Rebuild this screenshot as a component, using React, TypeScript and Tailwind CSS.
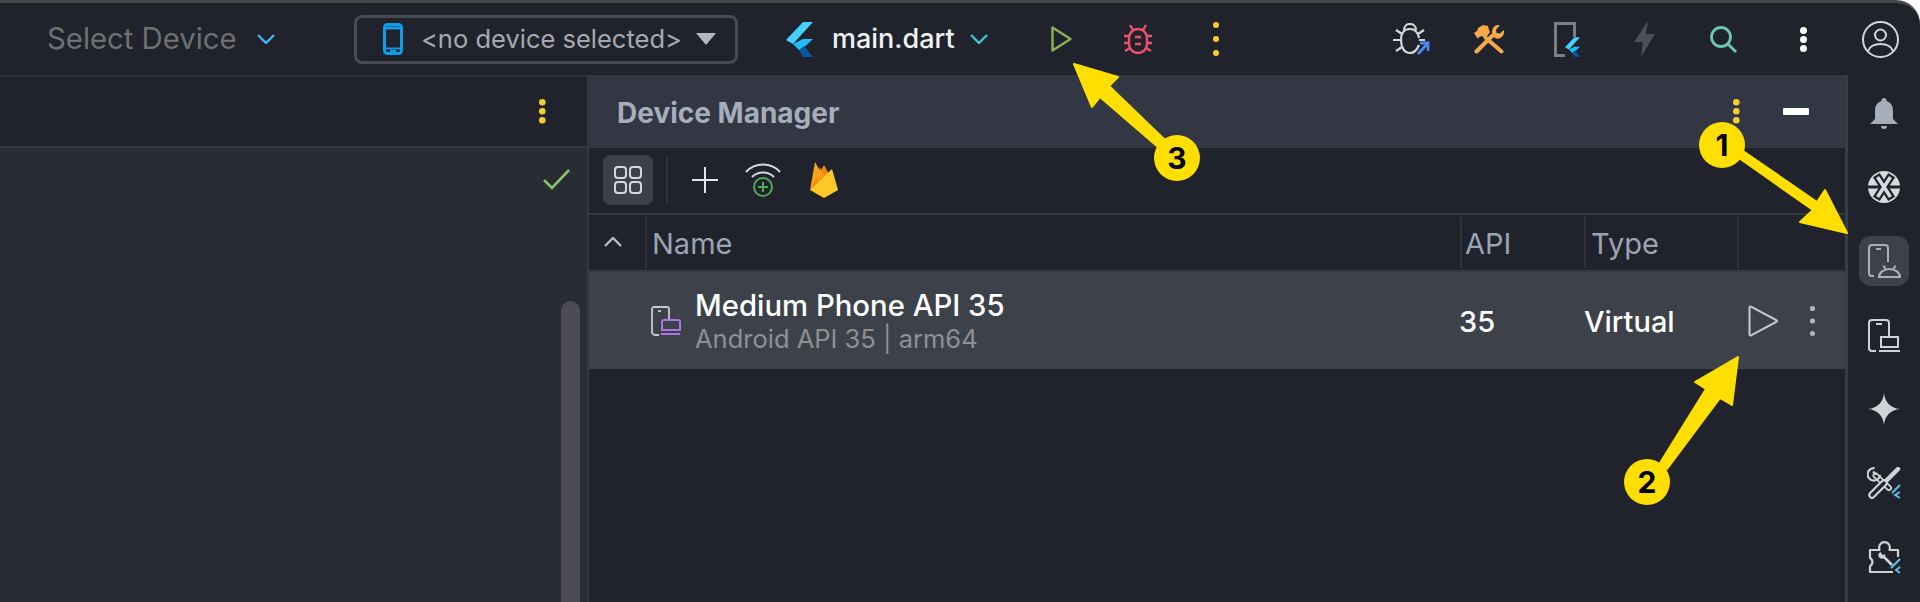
const Dots = ({ color, r = 3.5, gap = 9 }: { color: string; r?: number; gap?: number }) => (
  <svg width={r * 2 + 2} height={gap * 2 + r * 2 + 2} className="block shrink-0">
    {[0, 1, 2].map((i) => (
      <circle key={i} cx={r + 1} cy={r + 1 + i * gap} r={r} fill={color} />
    ))}
  </svg>
);

const Chevron = ({ color }: { color: string }) => (
  <svg width="18" height="10" viewBox="0 0 18 10" className="block shrink-0">
    <path d="M1 1l8 8 8-8" fill="none" stroke={color} strokeWidth="2.4" />
  </svg>
);

const FlutterMark = ({ className }: { className?: string }) => (
  <svg viewBox="0 0 27 35" className={className}>
    <path d="M0 18L17 0h10L7 22z" fill="#44d1fd" />
    <path d="M7 22l10-5h10L14 29z" fill="#1fbcfd" />
    <path d="M13 28l5-4 9 11H17z" fill="#08589c" />
  </svg>
);

const Hammer = () => (
  <svg width="30" height="30" viewBox="0 0 30 30" className="block shrink-0">
    <path d="M2.5 27.5L18 12" stroke="#f5a94a" strokeWidth="4" strokeLinecap="round" />
    <path d="M18 7a6 6 0 0 1 8-5.500l-4 4 .6 3.400 3.400.6 3.600-3.600a6.500 6.500 0 0 1-8.600 8.200L18 12z" fill="#f5a94a" />
    <path d="M12 14l15.500 13.500" stroke="#f5a94a" strokeWidth="4" strokeLinecap="round" />
    <path d="M0 9l3-2 1-3 5-3 5 1 1 4 1 2-5 7-3-3-3 1-1 2z" fill="#f5a94a" />
  </svg>
);

const ToolsSmall = () => (
  <svg width="34" height="33" viewBox="0 0 34 33" fill="none" className="block shrink-0">
    <path d="M8.500 8.500L22 21" stroke="#d0d2d6" strokeWidth="6" strokeLinecap="round" />
    <path d="M8.500 8.500L22 21" stroke="#20232b" strokeWidth="2.400" strokeLinecap="round" />
    <path d="M7.500 1.200a6.200 6.200 0 1 0 5.500 6.500" stroke="#d0d2d6" strokeWidth="2.200" />
    <path d="M6 4.500l3 3" stroke="#d0d2d6" strokeWidth="2.200" />
    <path d="M19 14L31 2" stroke="#d0d2d6" strokeWidth="4.500" strokeLinecap="round" />
    <path d="M5 28L17 16" stroke="#d0d2d6" strokeWidth="7.500" strokeLinecap="round" />
    <path d="M5 28L17 16" stroke="#20232b" strokeWidth="3.200" strokeLinecap="round" />
    <path d="M33 18l-8 8M33 25l-5 3 5 3" stroke="#5cc8ee" strokeWidth="1.800" />
  </svg>
);

const PuzzleTool = () => (
  <svg width="33" height="33" viewBox="0 0 33 33" fill="none" className="block shrink-0">
    <path d="M30 16V9h-8.500a5.500 5.500 0 1 0-10 0H2v8a4.500 4.500 0 0 1 0 8v6h23" stroke="#d0d2d6" strokeWidth="2.200" strokeLinejoin="round" />
    <path d="M15 15l9 9" stroke="#d0d2d6" strokeWidth="2.600" />
    <path d="M12.500 11a3.500 3.500 0 0 0 0 6.500 3.500 3.500 0 0 0 4.500-4.500l-2 1-1.500-1.500z" fill="#d0d2d6" />
    <path d="M32 18l-9 9M32 26l-4 3 4 3" stroke="#5cc8ee" strokeWidth="1.800" />
  </svg>
);

const PhoneOutline = ({ children }: { children: React.ReactNode }) => (
  <svg width="33" height="33" viewBox="0 0 33 33" fill="none" className="block shrink-0">
    <path d="M8 32H4a3 3 0 0 1-3-3V4a3 3 0 0 1 3-3h14a3 3 0 0 1 3 3v13" stroke="#d0d2d6" strokeWidth="2" />
    <path d="M8 5h6" stroke="#d0d2d6" strokeWidth="2" />
    {children}
  </svg>
);

const sideItems = [
  {
    key: "bell",
    icon: (
      <svg width="28" height="32" viewBox="0 0 28 32" className="mt-[2px] block">
        <path d="M14 0a2.500 2.500 0 0 1 2.500 3C21 4.500 23 8 23 13v8l5 5H0l5-5v-8c0-5 2-8.500 6.500-10A2.500 2.500 0 0 1 14 0z" fill="#a6adbb" />
        <path d="M11 28h6a3 3 0 0 1-6 0z" fill="#a6adbb" />
      </svg>
    ),
  },
  {
    key: "x",
    icon: (
      <svg width="32" height="32" viewBox="0 0 32 32" className="block">
        <circle cx="16" cy="16" r="16" fill="#d8d9dc" />
        <path d="M0 16h32" stroke="#20232b" strokeWidth="3" />
        <path d="M10.500 7.500L21.500 24.500M21.500 7.500L10.500 24.500" stroke="#20232b" strokeWidth="8" strokeLinecap="square" />
        <path d="M10.500 7.500L21.500 24.500M21.500 7.500L10.500 24.500" stroke="#d8d9dc" strokeWidth="3.500" strokeLinecap="square" />
      </svg>
    ),
  },
  {
    key: "android",
    active: true,
    icon: (
      <svg width="34" height="34" viewBox="0 0 34 34" fill="none" className="block">
        <path d="M7 32H5a3 3 0 0 1-3-3V4a3 3 0 0 1 3-3h13a3 3 0 0 1 3 3v14" stroke="#aab0bd" strokeWidth="2" />
        <path d="M9 5h5" stroke="#aab0bd" strokeWidth="2" />
        <path d="M12 33a10.500 8 0 0 1 21 0zM16.500 21.500l2.500 4.500M28.500 21.500l-2.500 4.500" stroke="#aab0bd" strokeWidth="2" />
      </svg>
    ),
  },
  {
    key: "phone",
    icon: (
      <PhoneOutline>
        <path d="M13 18h17v10H13zM11 32h21" stroke="#d0d2d6" strokeWidth="2" />
      </PhoneOutline>
    ),
  },
  {
    key: "star",
    icon: (
      <svg width="32" height="32" viewBox="0 0 32 32" className="block">
        <path d="M16 0c1 9 6 15 16 16-10 1-15 7-16 16-1-9-6-15-16-16 10-1 15-7 16-16z" fill="#d0d2d6" />
      </svg>
    ),
  },
  { key: "tools", icon: <ToolsSmall /> },
  { key: "puzzle", icon: <PuzzleTool /> },
];

export default function App() {
  return (
    <div className="relative h-[602px] w-[1920px] overflow-hidden bg-white font-['Inter',sans-serif]">
      <div className="flex h-full flex-col rounded-tr-[24px] border-t-[3px] border-[#47494e] bg-[#20232b]">
        {/* Top toolbar */}
        <div className="flex h-[72px] shrink-0 items-center">
          <span className="ml-[47px] w-[190px] whitespace-nowrap text-[29.300px] text-[#6f7073]">Select Device</span>
          <div className="ml-[20px] w-[18px]">
            <Chevron color="#3cb9f0" />
          </div>
          <div className="ml-[79px] flex h-[49px] w-[384px] items-center rounded-[8px] border-[3px] border-[#474a54] pl-[26px]">
            <svg width="20" height="32" viewBox="0 0 20 32" fill="none" className="block shrink-0">
              <rect x="1.500" y="1.500" width="17" height="29" rx="3" stroke="#0a9fe8" strokeWidth="3" />
              <path d="M1.500 5h17" stroke="#0a9fe8" strokeWidth="3" />
              <path d="M1.500 25.500h17M7 28h6" stroke="#0a9fe8" strokeWidth="2" />
            </svg>
            <span className="ml-[18px] w-[257px] whitespace-nowrap text-[25.500px] text-[#a5a9b3]">&lt;no device selected&gt;</span>
            <svg width="20" height="12" viewBox="0 0 20 12" className="ml-[18px] block shrink-0">
              <path d="M0 0h20L10 12z" fill="#b5b8c0" />
            </svg>
          </div>
          <FlutterMark className="ml-[48px] block h-[35px] w-[27px] shrink-0" />
          <span className="ml-[19px] w-[122px] whitespace-nowrap text-[27px] font-medium text-[#f2f3f6]">main.dart</span>
          <div className="ml-[16px] w-[18px]">
            <Chevron color="#40c4d8" />
          </div>
          <svg width="21" height="26" viewBox="0 0 21 26" fill="none" className="ml-[63px] block shrink-0">
            <path d="M1.500 1.500v23L19.500 13z" stroke="#8bb356" strokeWidth="2.400" strokeLinejoin="round" />
          </svg>
          <svg width="28" height="30" viewBox="0 0 28 30" fill="none" className="ml-[52px] block shrink-0" stroke="#f0506e" strokeWidth="2.400">
            <rect x="5" y="5" width="18" height="24" rx="9" />
            <path d="M9 6L6 1M19 6l3-5M0 12h5M23 12h5M0 19h5M23 19h5M1 27l5-3M27 27l-5-3M11 13h6M11 20h6" />
          </svg>
          <div className="ml-[60px] w-[9px]">
            <Dots color="#f5cf2e" r={3} gap={14} />
          </div>
          {/* bug + arrow */}
          <svg width="37" height="32" viewBox="0 0 37 32" fill="none" className="ml-[172px] block shrink-0">
            <g stroke="#d4d6da" strokeWidth="2.200">
              <path d="M26 22c-2 5-5 8-9 8-6 0-9-6-9-13s3-11 9-11c5 0 8 4 9 9" />
              <path d="M11 7c0-8 12-8 12 0M0 17h8M26 17h6M3 7l6 4M31 7l-6 4M3 28l6-4" />
            </g>
            <path d="M25 31l10-11M27 20h8v8" stroke="#4a86f0" strokeWidth="2.800" />
          </svg>
          <div className="ml-[44px]">
            <Hammer />
          </div>
          <div className="relative ml-[50px] h-[35px] w-[25px] shrink-0">
            <div className="h-full w-[22px] border-[3px] border-[#7d7f83]" />
            <FlutterMark className="absolute bottom-0 right-[-1px] h-[20px] w-[15px] bg-[#20232b]" />
          </div>
          <svg width="21" height="36" viewBox="0 0 21 36" className="ml-[55px] block shrink-0">
            <path d="M14 0L0 21h9L7 36l14-23h-9z" fill="#4c4f54" />
          </svg>
          <svg width="27" height="27" viewBox="0 0 27 27" fill="none" className="ml-[55px] block shrink-0" stroke="#6cc5b5" strokeWidth="2.800">
            <circle cx="11" cy="11" r="9.500" />
            <path d="M18 18l8 8" />
          </svg>
          <div className="ml-[62px] w-[8px]">
            <Dots color="#ffffff" r={3.5} gap={9} />
          </div>
          <svg width="37" height="37" viewBox="0 0 37 37" fill="none" className="ml-[55px] block shrink-0" stroke="#d4d6da" strokeWidth="2">
            <circle cx="18.500" cy="18.500" r="17.500" />
            <circle cx="18.500" cy="14" r="5.500" />
            <path d="M6 30c2-5 7-7 12.500-7S29 25 31 30" />
          </svg>
        </div>

        <div className="flex min-h-0 flex-1">
          {/* Left editor panel */}
          <div className="flex w-[587px] shrink-0 flex-col">
            <div className="flex h-[73px] shrink-0 items-center justify-end border-y-2 border-t-[#2d3038] border-b-[#353842] pr-[40px]">
              <Dots color="#f5cf2e" r={3.300} />
            </div>
            <div className="flex min-h-0 flex-1 flex-col items-end bg-[#282c34]">
              <svg width="27" height="21" viewBox="0 0 27 21" fill="none" className="mr-[17px] mt-[21px] block shrink-0">
                <path d="M1 11l8 8L26 1" stroke="#8cc265" strokeWidth="2.600" />
              </svg>
              <div className="mr-[7px] mt-[111px] w-[19px] flex-1 rounded-t-full bg-[#4a4c52]" />
            </div>
          </div>

          {/* Device Manager panel */}
          <div className="flex min-w-0 flex-1 flex-col">
            <div className="flex h-[73px] shrink-0 items-center bg-[#323743]">
              <span className="ml-[30px] mt-[2px] w-[1115px] whitespace-nowrap text-[28px] font-bold text-[#a6adbb]">Device Manager</span>
              <Dots color="#f5cf2e" r={3.300} />
              <div className="ml-[42px] h-[7px] w-[26px] rounded-[1px] bg-white" />
            </div>
            <div className="flex min-h-0 flex-1 flex-col border-l-2 border-[#353842]">
              <div className="flex h-[67px] shrink-0 items-center border-b-2 border-[#353842] pb-[2px]">
                <div className="ml-[14px] flex h-[50px] w-[50px] items-center justify-center rounded-[8px] bg-[#3d414a]">
                  <svg width="28" height="28" viewBox="0 0 28 28" fill="none" stroke="#d6d8dd" strokeWidth="2">
                    <rect x="1" y="1" width="11" height="11" rx="3" />
                    <rect x="16" y="1" width="11" height="11" rx="3" />
                    <rect x="1" y="16" width="11" height="11" rx="3" />
                    <rect x="16" y="16" width="11" height="11" rx="3" />
                  </svg>
                </div>
                <div className="ml-[13px] h-[46px] w-[2px] bg-[#2f323a]" />
                <svg width="26" height="26" viewBox="0 0 26 26" className="ml-[24px] block" stroke="#e4e5e8" strokeWidth="2">
                  <path d="M13 0v26M0 13h26" />
                </svg>
                <svg width="36" height="34" viewBox="0 0 36 34" fill="none" className="ml-[27px] block">
                  <path d="M1 9c9-10 25-10 34 0M7 14c6-6 16-6 22 0" stroke="#d6d8dd" strokeWidth="2" />
                  <circle cx="18" cy="24" r="9" stroke="#4fa95c" strokeWidth="2" />
                  <path d="M18 19v10M13 24h10" stroke="#4fa95c" strokeWidth="2" />
                </svg>
                <svg width="28" height="37" viewBox="0 0 28 37" className="ml-[29px] block">
                  <path d="M0 29L5 1l8 14z" fill="#f6a21a" />
                  <path d="M0 29L14 4l5 9z" fill="#f58a0c" />
                  <path d="M0 29L22 8l6 21-14 8z" fill="#ffca28" />
                  <path d="M10 6l3 9-6 6z" fill="#f6a21a" />
                </svg>
              </div>
              <div className="flex h-[57px] shrink-0 items-center border-b-2 border-[#353842] text-[29px] text-[#9ba3b4]">
                <div className="flex h-full w-[56px] shrink-0 items-center pb-[2px] pl-[15px]">
                  <svg width="18" height="10" viewBox="0 0 18 10" className="block">
                    <path d="M1 9l8-8 8 8" fill="none" stroke="#b5bac4" strokeWidth="2.400" />
                  </svg>
                </div>
                <div className="flex h-[51px] w-[815px] shrink-0 items-center border-l-2 border-[#2f323a] pl-[5px] pt-[3px]">Name</div>
                <div className="flex h-[51px] w-[124px] shrink-0 items-center border-l-2 border-[#2f323a] pl-[3px] pt-[3px]">API</div>
                <div className="flex h-[51px] w-[153px] shrink-0 items-center border-l-2 border-[#2f323a] pl-[5px] pt-[3px]">Type</div>
                <div className="h-[51px] w-[2px] shrink-0 bg-[#2f323a]" />
              </div>
              <div className="flex h-[97px] shrink-0 items-center bg-[#3d414a]">
                <svg width="30" height="30" viewBox="0 0 30 30" fill="none" className="ml-[62px] block shrink-0">
                  <path d="M8 29H4a3 3 0 0 1-3-3V3a2 2 0 0 1 2-2h13a2 2 0 0 1 2 2v10" stroke="#c6c9cf" strokeWidth="1.800" />
                  <path d="M7 5h3" stroke="#c6c9cf" strokeWidth="1.800" />
                  <path d="M11 16a2 2 0 0 1 2-2h14a2 2 0 0 1 2 2v8H11zM10 28h19" stroke="#a974e4" strokeWidth="2" />
                </svg>
                <div className="ml-[14px] flex w-[764px] shrink-0 flex-col pt-[3px]">
                  <span className="whitespace-nowrap text-[29.300px] font-medium leading-[34px] text-white">Medium Phone API 35</span>
                  <span className="whitespace-nowrap text-[25.500px] leading-[32px] text-[#8e9094]">Android API 35 | arm64</span>
                </div>
                <span className="w-[125px] shrink-0 pt-[3px] text-[29px] font-medium text-white">35</span>
                <span className="w-[164px] shrink-0 pt-[3px] text-[29px] font-medium text-white">Virtual</span>
                <svg width="30" height="32" viewBox="0 0 30 32" fill="none" className="block shrink-0">
                  <path d="M1.500 2.500v27a1 1 0 0 0 1.500.8L28 17a1 1 0 0 0 0-2L3 1.700a1 1 0 0 0-1.500.8z" stroke="#c6c9cf" strokeWidth="2" />
                </svg>
                <div className="ml-[31px]">
                  <Dots color="#b5b8bf" r={2.500} gap={12.500} />
                </div>
              </div>
            </div>
          </div>

          {/* Right tool strip */}
          <div className="flex w-[75px] shrink-0 flex-col items-center border-l-[3px] border-[#393c44] pt-[1px]">
            {sideItems.map((item) => (
              <div key={item.key} className="flex h-[74px] w-full shrink-0 items-center justify-center">
                {item.active ? (
                  <div className="flex h-[50px] w-[50px] items-center justify-center rounded-[12px] bg-[#3d414a]">{item.icon}</div>
                ) : (
                  item.icon
                )}
              </div>
            ))}
          </div>
        </div>
      </div>

      {/* Tutorial arrows */}
      <svg width="1920" height="602" className="pointer-events-none absolute inset-0 block">
        <g fill="#ffdf00" stroke="#ffdf00" strokeWidth="2" strokeLinejoin="round">
          <path d="M1743 151L1817 202L1825 190L1847 233L1800 222L1813 210L1739 158z" />
          <path d="M1074 64L1118 77L1109 86L1166 141L1158 147L1100 97L1092 107z" />
          <path d="M1738 357L1732 405L1720 398L1667 469L1660 463L1706 389L1695 382z" />
        </g>
      </svg>
      {[
        { n: "1", pos: "left-[1699px] top-[122px]" },
        { n: "2", pos: "left-[1624px] top-[459px]" },
        { n: "3", pos: "left-[1154px] top-[135px]" },
      ].map((b) => (
        <div
          key={b.n}
          className={`absolute flex h-[46px] w-[46px] items-center justify-center rounded-full bg-[#ffdf00] text-[30px] font-bold text-black ${b.pos}`}
        >
          {b.n}
        </div>
      ))}
    </div>
  );
}
